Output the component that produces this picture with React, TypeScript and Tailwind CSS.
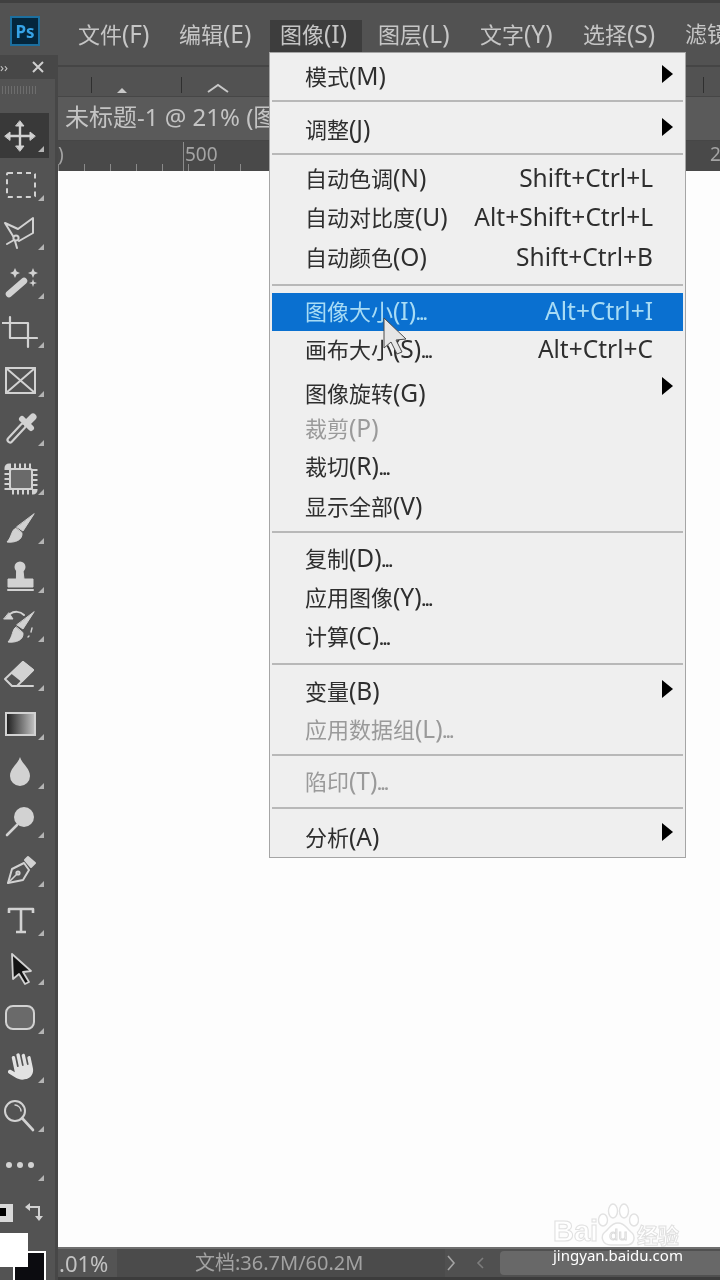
import type { ReactNode } from 'react';
import { FaHand } from 'react-icons/fa6';

const FONT = "font-['Noto_Sans','Noto_Sans_CJK_SC',sans-serif]";
const LIGHT = '#d2d2d2';

const TOP_MENUS = [
  { label: '文件(F)', cls: 'w-[101px] pl-[6px]' },
  { label: '编辑(E)', cls: 'w-[97px] pl-[6px]' },
  { label: '图像(I)', cls: 'w-[92px] pl-[10px] bg-[#3d3d3d]' },
  { label: '图层(L)', cls: 'w-[102px] pl-[16px]' },
  { label: '文字(Y)', cls: 'w-[103px] pl-[16px]' },
  { label: '选择(S)', cls: 'w-[102px] pl-[16px]' },
  { label: '滤镜', cls: 'w-[51px] pl-[16px]' },
];

// the hotkey part sits in a wider face than the CJK part in the picture
function Label({ text }: { text: string }) {
  const m = text.match(/^(.*?)(\(.\))(\.\.\.)?$/);
  if (!m) return <span>{text}</span>;
  return (
    <span className="whitespace-nowrap">
      {m[1]}
      <span className="text-[24.5px]">{m[2]}</span>
      {m[3] && <span className="text-[16px] font-bold tracking-[-1px]">{m[3]}</span>}
    </span>
  );
}

function Glyph({ children }: { children: ReactNode }) {
  return (
    <svg width="36" height="36" viewBox="0 0 36 36" fill="none" stroke={LIGHT} strokeWidth="2" strokeLinecap="round" strokeLinejoin="round">
      {children}
    </svg>
  );
}

const BRUSH = 'M32 4 L21 21 L15 17 Z';

const TOOLS: { icon: ReactNode; active?: boolean }[] = [
  {
    active: true,
    icon: (
      <Glyph>
        <path d="M18 6V30M6 18H30" strokeWidth="2.4" />
        <path d="M18 3l4 5h-8zM18 33l4-5h-8zM3 18l5-4v8zM33 18l-5-4v8z" fill={LIGHT} strokeWidth="1" />
      </Glyph>
    ),
  },
  { icon: <Glyph><rect x="5" y="6" width="28" height="24" strokeDasharray="5 4" strokeLinecap="butt" rx="1" /></Glyph> },
  {
    icon: (
      <Glyph>
        <path d="M3 7L16 13L31 2V17L17 25M3 7L11 20" />
        <circle cx="14" cy="22" r="2.6" />
        <path d="M5 28L12 24M13 25L15 32" />
      </Glyph>
    ),
  },
  {
    icon: (
      <Glyph>
        <path d="M7 29L22 16" strokeWidth="6.5" />
        <path d="M13 3l1.6 3.4L18 8l-3.4 1.6L13 13l-1.6-3.4L8 8l3.4-1.6zM31 3l1.4 3.4L36 8l-3.6 1.6L31 13l-1.4-3.4L26 8l3.6-1.6zM31 14l1 3 3 1-3 1-1 3-1-3-3-1 3-1z" fill={LIGHT} stroke="none" />
      </Glyph>
    ),
  },
  { icon: <Glyph><path d="M8 3V24H35M0 9H26V33" strokeWidth="2.2" /></Glyph> },
  {
    icon: (
      <Glyph>
        <rect x="4" y="5" width="29" height="25" />
        <path d="M4 5L33 30M33 5L4 30" />
      </Glyph>
    ),
  },
  {
    icon: (
      <Glyph>
        <path d="M8 28L21 14" strokeWidth="7" />
        <path d="M8 28L21 14" strokeWidth="2.8" stroke="#535353" />
        <path d="M20 7L29 16" strokeWidth="6" />
        <path d="M26 10L31 5" strokeWidth="7" />
      </Glyph>
    ),
  },
  {
    icon: (
      <Glyph>
        <rect x="7" y="7" width="24" height="22" strokeWidth="9" strokeDasharray="2 3" strokeLinecap="butt" />
        <rect x="8" y="8" width="22" height="20" rx="2" fill="#6a6a6a" />
      </Glyph>
    ),
  },
  {
    icon: (
      <Glyph>
        <path d={BRUSH} fill={LIGHT} strokeWidth="1" />
        <path d="M14 18C9 20 10 27 5 32C13 33 21 30 20 23Z" fill={LIGHT} strokeWidth="1" />
      </Glyph>
    ),
  },
  {
    icon: (
      <Glyph>
        <circle cx="18" cy="8" r="5.5" fill={LIGHT} stroke="none" />
        <path d="M15 12H21L22 20H31V28H6V20H14Z" fill={LIGHT} strokeWidth="1" />
        <path d="M6 31H31" />
      </Glyph>
    ),
  },
  {
    icon: (
      <Glyph>
        <path d={BRUSH} fill={LIGHT} strokeWidth="1" />
        <path d="M14 19C10 21 11 29 6 34C14 35 22 32 21 25Z" fill={LIGHT} strokeWidth="1" />
        <path d="M2 11L11 11L7 5Z" fill={LIGHT} strokeWidth="1" />
        <path d="M8 6C12 3 18 3 22 7" />
        <path d="M30 20L29 24M27 28L26 29" strokeWidth="1.4" />
      </Glyph>
    ),
  },
  {
    icon: (
      <Glyph>
        <path d="M21 5L31 13L15 29H10L3 22Z" />
        <path d="M21 5L31 13L20 24L10 16Z" fill={LIGHT} />
        <path d="M15 29H31" />
      </Glyph>
    ),
  },
  {
    icon: (
      <Glyph>
        <defs>
          <linearGradient id="grad" x1="0" x2="1" y1="0" y2="0">
            <stop offset="0" stopColor="#1c1c1c" />
            <stop offset="1" stopColor="#c4c4c4" />
          </linearGradient>
        </defs>
        <rect x="4" y="7" width="29" height="22" fill="url(#grad)" strokeLinejoin="miter" />
      </Glyph>
    ),
  },
  { icon: <Glyph><path d="M18 2C20 9 28 13 28 21A10 10 0 0 1 8 21C8 13 16 9 18 2Z" fill={LIGHT} stroke="none" /></Glyph> },
  {
    icon: (
      <Glyph>
        <circle cx="22" cy="13" r="10" fill={LIGHT} stroke="none" />
        <path d="M15 21L5 31" strokeWidth="2.6" />
      </Glyph>
    ),
  },
  {
    icon: (
      <Glyph>
        <path d="M6 30L10 16L22 10L27 17L21 27Z" />
        <path d="M6 30L15 21" strokeWidth="1.6" />
        <circle cx="16" cy="20" r="1.6" />
        <path d="M23 7L26 4L33 10L29 14Z" fill={LIGHT} />
      </Glyph>
    ),
  },
  { icon: <Glyph><path d="M7 11V7H31V11M19 7V30M14 30H24" strokeWidth="2.6" strokeLinecap="butt" /></Glyph> },
  {
    icon: (
      <Glyph>
        <path d="M10 3L29 20L21 21L27 31L23 33L17 23L11 28Z" fill="#141414" strokeWidth="1.8" />
      </Glyph>
    ),
  },
  { icon: <Glyph><rect x="4" y="6" width="28" height="23" rx="7" fill="#6a6a6a" /></Glyph> },
  { icon: <FaHand size={27} color="#e2e2e2" className="-rotate-12" /> },
  {
    icon: (
      <Glyph>
        <circle cx="13" cy="13" r="10" />
        <path d="M20 20L31 32" strokeWidth="2.6" />
        <path d="M13 7C16 7 19 10 19 13" strokeWidth="1.4" />
      </Glyph>
    ),
  },
  {
    icon: (
      <svg width="36" height="36" viewBox="0 0 36 36" fill={LIGHT}>
        <circle cx="7" cy="18" r="3" />
        <circle cx="18" cy="18" r="3" />
        <circle cx="29" cy="18" r="3" />
      </svg>
    ),
  },
];

function ToolButton({ icon, active }: { icon: ReactNode; active?: boolean }) {
  return (
    <div className="relative flex h-[49px] w-[49px] items-center justify-center">
      {active && <div className="absolute inset-x-0 inset-y-[2px] bg-[#393939]" />}
      <div className="relative mr-[9px] flex h-[36px] w-[36px] items-center justify-center">{icon}</div>
      <div className="absolute bottom-[8px] right-[5px] h-0 w-0 border-b-[6px] border-l-[6px] border-b-[#b4b4b4] border-l-transparent" />
    </div>
  );
}

function Toolbar() {
  return (
    <aside className="relative z-10 -mt-[10px] flex w-[58px] shrink-0 flex-col border-r-[3px] border-[#474747] bg-[#535353]">
      <div className="flex h-[24px] items-center justify-between bg-[#474747] pr-[10px] text-[#c6c6c6]">
        <span className="text-[13px] leading-none">››</span>
        <svg width="14" height="14" viewBox="0 0 14 14" stroke="#cfcfcf" strokeWidth="2">
          <path d="M2 2L12 12M12 2L2 12" />
        </svg>
      </div>
      <div className="mx-[2px] mt-[7px] h-[8px] w-[36px] bg-[repeating-linear-gradient(90deg,#6d6d6d_0_1px,#535353_1px_3px)]" />
      <div className="mt-[17px] flex flex-col">
        {TOOLS.map((tool, i) => (
          <ToolButton key={i} icon={tool.icon} active={tool.active} />
        ))}
      </div>
      <div className="relative flex-1">
        <div className="absolute left-0 top-[15px] h-[18px] w-[13px] bg-[#d8d8d8] pt-[4px]">
          <div className="h-[8px] w-[6px] bg-black" />
        </div>
        <svg className="absolute left-[24px] top-[12px]" width="22" height="22" viewBox="0 0 22 22" fill="none" stroke={LIGHT} strokeWidth="2">
          <path d="M4 6H15V16" />
          <path d="M1 6L6 2V10ZM11 15H19L15 20Z" fill={LIGHT} stroke="none" />
        </svg>
        <div className="absolute bottom-0 left-[13px] h-[29px] w-[33px] border-2 border-b-0 border-white bg-[#0c0c10]" />
        <div className="absolute bottom-[13px] left-0 h-[34px] w-[28px] bg-white" />
      </div>
    </aside>
  );
}

type Row = { label: string; keys?: string; sub?: string; off?: boolean; hi?: boolean; cls?: string };

function MenuRow({ label, keys, sub, off, hi, cls }: Row) {
  const color = hi ? 'bg-[#0a70d0] text-[#a8dcf5]' : off ? 'text-[#9a9a9a]' : 'text-[#2e2e2e]';
  return (
    <div className={`relative mx-[2px] flex h-[38px] shrink-0 items-center justify-between pb-[1px] pl-[33px] pr-[30px] ${color} ${cls ?? ''}`}>
      <Label text={label} />
      {keys && <span className="text-[24.5px]">{keys}</span>}
      {sub && <span className={`-mr-[20px] h-0 w-0 border-y-[9px] border-l-[11px] border-y-transparent border-l-black ${sub}`} />}
    </div>
  );
}

function Sep({ cls }: { cls: string }) {
  return <div className={`mx-[2px] h-[2px] shrink-0 bg-[#b8b8b8] ${cls}`} />;
}

function ImageMenu() {
  return (
    <div className="absolute left-[269px] top-[52px] z-20 flex h-[806px] w-[417px] flex-col border border-[#a5a5a5] bg-[#efefef] pt-[5px] text-[22px] leading-none">
      <MenuRow label="模式(M)" sub="-mt-[5px]" />
      <Sep cls="mt-[4px] mb-[9px]" />
      <MenuRow label="调整(J)" sub="-mt-[5px]" />
      <Sep cls="mt-[4px] mb-[5px]" />
      <MenuRow label="自动色调(N)" keys="Shift+Ctrl+L" />
      <MenuRow label="自动对比度(U)" keys="Alt+Shift+Ctrl+L" cls="mt-[1px]" />
      <MenuRow label="自动颜色(O)" keys="Shift+Ctrl+B" cls="mt-[2px]" />
      <Sep cls="mt-[7px] mb-[7px]" />
      <MenuRow label="图像大小(I)..." keys="Alt+Ctrl+I" hi />
      <MenuRow label="画布大小(S)..." keys="Alt+Ctrl+C" />
      <MenuRow label="图像旋转(G)" sub="-mt-[15px]" cls="mt-[6px]" />
      <MenuRow label="裁剪(P)" off cls="-mt-[3px]" />
      <MenuRow label="裁切(R)..." />
      <MenuRow label="显示全部(V)" cls="mt-[2px]" />
      <Sep cls="mt-[5px] mb-[7px]" />
      <MenuRow label="复制(D)..." />
      <MenuRow label="应用图像(Y)..." cls="mt-[1px]" />
      <MenuRow label="计算(C)..." cls="mt-[1px]" />
      <Sep cls="mt-[7px] mb-[8px]" />
      <MenuRow label="变量(B)" sub="-mt-[5px]" />
      <MenuRow label="应用数据组(L)..." off />
      <Sep cls="mt-[5px] mb-[7px]" />
      <MenuRow label="陷印(T)..." off />
      <Sep cls="mt-[6px] mb-[10px]" />
      <MenuRow label="分析(A)" sub="-mt-[11px]" />
    </div>
  );
}

function Watermark() {
  return (
    <div className="absolute left-[553px] top-[1203px] z-10 h-[62px] w-[130px]">
      <svg className="absolute left-[44px] top-0" width="42" height="44" viewBox="0 0 42 44" fill="#fff" stroke="#e2e2e2" strokeWidth="1.4">
        <ellipse cx="6" cy="17" rx="4.5" ry="6" />
        <ellipse cx="16" cy="8" rx="4.5" ry="7" />
        <ellipse cx="27" cy="8" rx="4.5" ry="7" />
        <ellipse cx="37" cy="17" rx="4.5" ry="6" />
        <path d="M21 20C14 20 13 25 8 29C3 33 5 42 14 42H29C38 42 39 33 34 29C29 25 28 20 21 20Z" />
      </svg>
      <span className="absolute left-[56px] top-[22px] text-[15px] leading-[18px] text-white [-webkit-text-stroke:1px_#dcdcdc]">du</span>
      <span className="absolute left-0 top-[13px] font-['Liberation_Sans',sans-serif] text-[29px] font-bold leading-[30px] text-white [-webkit-text-stroke:1px_#e0e0e0]">Bai</span>
      <span className="absolute left-[84px] top-[20px] whitespace-nowrap text-[21px] font-bold leading-[24px] text-white [-webkit-text-stroke:1px_#e0e0e0]">经验</span>
      <span className="absolute left-0 top-[44px] whitespace-nowrap text-[15px] leading-[16px] text-white">jingyan.baidu.com</span>
    </div>
  );
}

export default function App() {
  return (
    <div className={`relative flex h-[1280px] w-[720px] flex-col overflow-hidden bg-[#535353] blur-[0.4px] ${FONT}`}>
      <header className="flex h-[65px] shrink-0 items-start border-t-[3px] border-[#404040] bg-[#525252]">
        <div className="ml-[10px] mt-[13px] flex h-[30px] w-[30px] items-center justify-center border-2 border-[#1c6f9f] bg-[#04263c] text-[17px] font-bold leading-none text-[#36a3e6]">
          Ps
        </div>
        <nav className="ml-[32px] mt-[17px] flex h-[32px] text-[22px] leading-[27px] text-[#c6c6c6]">
          {TOP_MENUS.map((m) => (
            <div key={m.label} className={`whitespace-nowrap ${m.cls}`}>
              <Label text={m.label} />
            </div>
          ))}
        </nav>
      </header>

      <div className="flex min-h-0 flex-1">
        <Toolbar />
        <main className="flex min-w-0 flex-1 flex-col">
          <div className="relative flex h-[31px] shrink-0 items-end border-t-2 border-[#454545] bg-[#525252]">
            <div className="absolute bottom-[3px] left-[33px] h-[16px] w-px bg-[#2f2f2f]" />
            <div className="absolute bottom-[3px] left-[123px] h-[16px] w-px bg-[#2f2f2f]" />
            <div className="absolute bottom-[3px] left-[645px] h-[16px] w-px bg-[#2f2f2f]" />
            <div className="absolute bottom-[3px] left-[59px] h-0 w-0 border-x-[5px] border-b-[5px] border-x-transparent border-b-[#c8c8c8]" />
            <svg className="absolute bottom-[3px] left-[148px]" width="24" height="10" viewBox="0 0 24 10" fill="none" stroke="#c8c8c8" strokeWidth="2">
              <path d="M2 9L12 2L22 9" />
            </svg>
          </div>
          <div className="flex h-[44px] shrink-0 items-center whitespace-nowrap border-t border-[#464646] bg-[#5a5a5a] pb-[4px] pl-[7px] text-[24px] leading-none text-[#c4c4c4]">
            未标题-1 @ 21% (图
          </div>
          <div className="relative h-[31px] shrink-0 border-t border-[#464646] bg-[#494949] text-[19px] leading-none text-[#a4a4a4]">
            <div className="absolute bottom-0 left-[125px] h-[29px] w-px bg-[#8c8c8c]" />
            <span className="absolute left-[127px] top-[4px]">500</span>
            <span className="absolute left-0 top-[4px]">)</span>
            <div className="absolute bottom-0 left-0 h-[7px] w-[205px] bg-[repeating-linear-gradient(90deg,#8a8a8a_0_1px,transparent_1px_26px)]" />
            <span className="absolute left-[652px] top-[4px]">2</span>
          </div>
          <div className="min-h-0 flex-1 bg-[#fdfdfd]" />
          <footer className="flex h-[33px] shrink-0 items-stretch border-b-[3px] border-t-2 border-[#3c3c3c] border-t-[#6f6f6f] bg-[#505050] text-[20px] leading-[28px]">
            <div className="w-[59px] whitespace-nowrap bg-[#545454] pl-[1px] text-[22px] text-[#c2c2c2]">.01%</div>
            <div className="flex w-[328px] items-center whitespace-nowrap bg-[#4b4b4b] pl-[78px] text-[#a2a2a2]">文档:36.7M/60.2M</div>
            <div className="flex w-[30px] items-center">
              <svg width="12" height="18" viewBox="0 0 12 18" fill="none" stroke="#a4a4a4" strokeWidth="1.6">
                <path d="M3 2L9 9L3 16" />
              </svg>
            </div>
            <div className="flex w-[25px] items-center">
              <svg width="12" height="14" viewBox="0 0 12 14" fill="none" stroke="#7d7d7d" strokeWidth="1.6">
                <path d="M8 2L3 7L8 12" />
              </svg>
            </div>
            <div className="my-[2px] flex-1 rounded-l-[4px] bg-[#686868]" />
          </footer>
        </main>
      </div>

      <ImageMenu />
      <Watermark />

      <svg className="absolute left-[382px] top-[316px] z-30" width="36" height="40" viewBox="0 0 36 40" fill="#e6e6e6" stroke="#4a4a4a" strokeWidth="1">
        <path d="M2 2L24 23L14 24L20 36L15 38L9 26L2 32Z" />
      </svg>
    </div>
  );
}
